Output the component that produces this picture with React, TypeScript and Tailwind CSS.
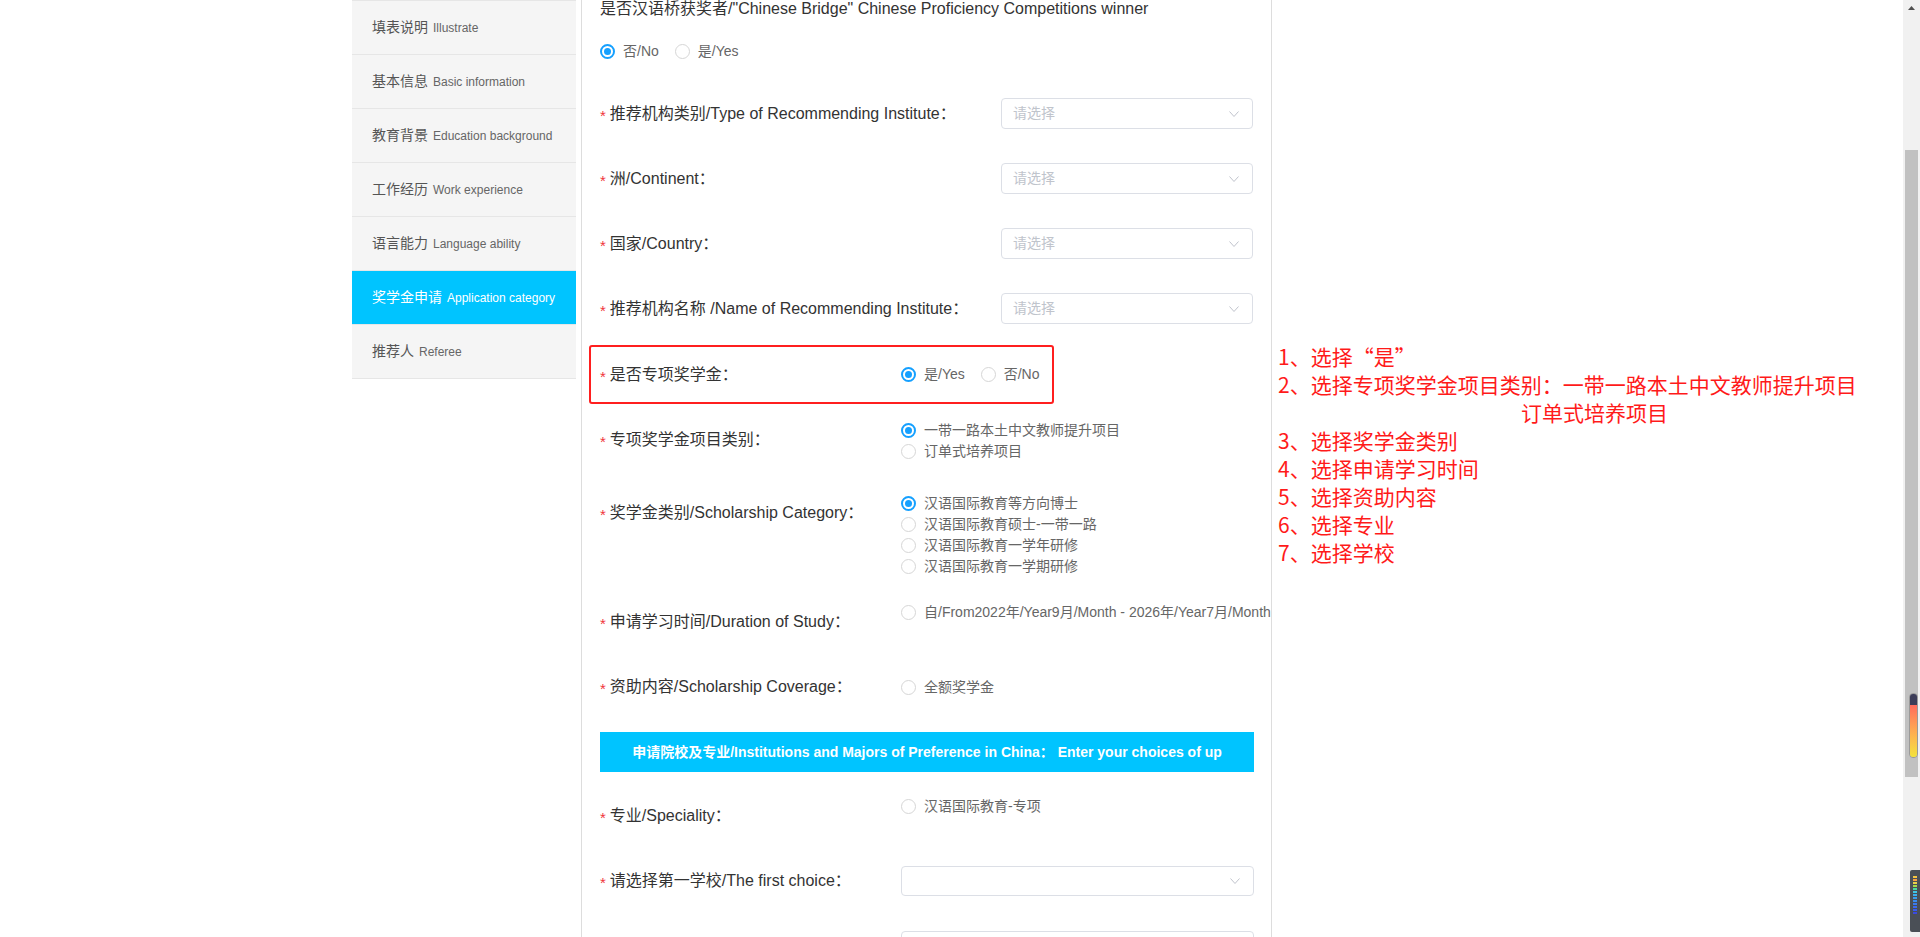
import React from "react";

const FONT = "font-['Liberation_Sans','Noto_Sans_CJK_SC',sans-serif]";

function Radio({ checked, label, className = "" }: { checked?: boolean; label: string; className?: string }) {
  return (
    <div className={"flex shrink-0 items-center whitespace-nowrap " + className}>
      {checked ? (
        <span className="flex h-[15px] w-[15px] shrink-0 items-center justify-center rounded-full border-2 border-[#15a0ff] bg-white">
          <span className="h-[7px] w-[7px] rounded-full bg-[#15a0ff]" />
        </span>
      ) : (
        <span className="h-[15px] w-[15px] shrink-0 rounded-full border border-[#d6d6d6] bg-white" />
      )}
      <span className="ml-[8px] text-[14px] text-[#666666]">{label}</span>
    </div>
  );
}

function Label({ text, className = "" }: { text: string; className?: string }) {
  return (
    <div className={"flex shrink-0 items-center whitespace-nowrap text-[16px] text-[#333333] " + className}>
      <span className="mr-[4px] mt-[3px] text-[15px] leading-none text-[#f0353b]">*</span>
      <span>{text}</span>
    </div>
  );
}

function Chevron() {
  return (
    <svg width="10" height="6" viewBox="0 0 10 6" fill="none">
      <polyline points="0.5,0.5 5,5.5 9.5,0.5" stroke="#c0c4cc" strokeWidth="1" />
    </svg>
  );
}

function Select({ placeholder, className = "" }: { placeholder?: string; className?: string }) {
  return (
    <div
      className={
        "flex shrink-0 items-center justify-between rounded-[4px] border border-[#dcdfe6] bg-white pl-[11px] pr-[13px] " +
        className
      }
    >
      <span className="text-[14px] text-[#c0c4cc]">{placeholder}</span>
      <Chevron />
    </div>
  );
}

const navItems = [
  { zh: "填表说明", en: "Illustrate" },
  { zh: "基本信息", en: "Basic information" },
  { zh: "教育背景", en: "Education background" },
  { zh: "工作经历", en: "Work experience" },
  { zh: "语言能力", en: "Language ability" },
  { zh: "奖学金申请", en: "Application category", active: true },
  { zh: "推荐人", en: "Referee" },
];

const notes = [
  "1、选择“是”",
  "2、选择专项奖学金项目类别：一带一路本土中文教师提升项目",
  "__indent__订单式培养项目",
  "3、选择奖学金类别",
  "4、选择申请学习时间",
  "5、选择资助内容",
  "6、选择专业",
  "7、选择学校",
];

export default function App() {
  return (
    <div className={"flex h-[937px] w-[1920px] overflow-hidden bg-white " + FONT}>
      {/* left blank */}
      <div className="w-[352px] shrink-0" />

      {/* sidebar */}
      <aside className="w-[224px] shrink-0 self-start border-t border-[#e6e6e6] bg-[#f5f5f5]">
        {navItems.map((it) => (
          <div
            key={it.zh}
            className={
              it.active
                ? "flex h-[54px] items-center border-b border-[#e6e6e6] bg-[#00c4ff] pl-[20px] text-white"
                : "flex h-[54px] items-center border-b border-[#e6e6e6] pl-[20px]"
            }
          >
            <span className={it.active ? "text-[14px] text-white" : "text-[14px] text-[#555555]"}>{it.zh}</span>
            <span className={it.active ? "ml-[5px] text-[12px] text-white" : "ml-[5px] text-[12px] text-[#666666]"}>
              {it.en}
            </span>
          </div>
        ))}
      </aside>

      {/* main form panel */}
      <main className="ml-[5px] flex w-[691px] shrink-0 flex-col overflow-hidden border-x border-[#dddddd] pl-[18px] pr-[17px]">
        <div className="h-[18px] whitespace-nowrap text-[16px] leading-[18px] text-[#333333]">
          是否汉语桥获奖者/"Chinese Bridge" Chinese Proficiency Competitions winner
        </div>

        <div className="mt-[23px] flex h-[20px] items-center">
          <Radio checked label="否/No" className="mr-[16px]" />
          <Radio label="是/Yes" />
        </div>

        <div className="mt-[37px] flex h-[31px] items-center">
          <Label text="推荐机构类别/Type of Recommending Institute：" className="w-[401px]" />
          <Select placeholder="请选择" className="h-[31px] w-[252px]" />
        </div>
        <div className="mt-[34px] flex h-[31px] items-center">
          <Label text="洲/Continent：" className="w-[401px]" />
          <Select placeholder="请选择" className="h-[31px] w-[252px]" />
        </div>
        <div className="mt-[34px] flex h-[31px] items-center">
          <Label text="国家/Country：" className="w-[401px]" />
          <Select placeholder="请选择" className="h-[31px] w-[252px]" />
        </div>
        <div className="mt-[34px] flex h-[31px] items-center">
          <Label text="推荐机构名称 /Name of Recommending Institute：" className="w-[401px]" />
          <Select placeholder="请选择" className="h-[31px] w-[252px]" />
        </div>

        <div className="relative mt-[21px] flex h-[59px] shrink-0 items-center">
          <div className="pointer-events-none absolute inset-y-0 left-[-11px] w-[465px] rounded-[3px] border-2 border-[#ff1f1f]" />
          <Label text="是否专项奖学金：" className="w-[301px]" />
          <Radio checked label="是/Yes" className="mr-[16px]" />
          <Radio label="否/No" />
        </div>

        <div className="mt-[16px] flex items-start">
          <Label text="专项奖学金项目类别：" className="h-[40px] w-[301px]" />
          <div className="flex flex-col">
            <Radio checked label="一带一路本土中文教师提升项目" className="h-[21px]" />
            <Radio label="订单式培养项目" className="h-[21px]" />
          </div>
        </div>

        <div className="mt-[31px] flex items-start">
          <Label text="奖学金类别/Scholarship Category：" className="h-[40px] w-[301px]" />
          <div className="flex flex-col">
            <Radio checked label="汉语国际教育等方向博士" className="h-[21px]" />
            <Radio label="汉语国际教育硕士-一带一路" className="h-[21px]" />
            <Radio label="汉语国际教育一学年研修" className="h-[21px]" />
            <Radio label="汉语国际教育一学期研修" className="h-[21px]" />
          </div>
        </div>

        <div className="mt-[25px] flex items-start">
          <Label text="申请学习时间/Duration of Study：" className="h-[40px] w-[301px]" />
          <Radio label="自/From2022年/Year9月/Month - 2026年/Year7月/Month" className="h-[21px]" />
        </div>

        <div className="mt-[25px] flex h-[40px] items-center">
          <Label text="资助内容/Scholarship Coverage：" className="h-[40px] w-[301px]" />
          <Radio label="全额奖学金" className="h-[21px]" />
        </div>

        <div className="mt-[25px] flex h-[40px] shrink-0 items-center justify-center overflow-hidden whitespace-nowrap bg-[#00c4ff] text-[14px] font-bold text-white">
          申请院校及专业/Institutions and Majors of Preference in China： Enter your choices of up
        </div>

        <div className="mt-[24px] flex items-start">
          <Label text="专业/Speciality：" className="h-[40px] w-[301px]" />
          <Radio label="汉语国际教育-专项" className="h-[21px]" />
        </div>

        <div className="mt-[30px] flex h-[30px] items-center">
          <Label text="请选择第一学校/The first choice：" className="w-[301px]" />
          <Select className="h-[30px] w-[353px]" />
        </div>

        <div className="mt-[35px] flex h-[30px] items-center">
          <div className="w-[301px] shrink-0" />
          <Select className="h-[30px] w-[353px]" />
        </div>
      </main>

      {/* annotations */}
      <section className="ml-[6px] flex-1 pt-[342px] font-['Noto_Sans_CJK_SC',sans-serif] text-[21px] leading-[28px] text-[#ff1a1a]">
        {notes.map((n) =>
          n.startsWith("__indent__") ? (
            <div key={n} className="whitespace-nowrap pl-[243px]">
              {n.replace("__indent__", "")}
            </div>
          ) : (
            <div key={n} className="whitespace-nowrap">
              {n}
            </div>
          )
        )}
      </section>

      {/* scrollbar */}
      <div className="relative flex w-[17px] shrink-0 flex-col items-center bg-[#f1f1f1]">
        <svg className="mt-[6px]" width="7" height="4" viewBox="0 0 7 4">
          <polygon points="0,4 3.5,0 7,4" fill="#505050" />
        </svg>
        <div className="mt-[140px] h-[627px] w-[13px] bg-[#c1c1c1]" />
        <div className="absolute left-[6px] top-[693px] flex h-[65px] w-[9px] flex-col overflow-hidden rounded-[4px] border border-[#9a9a9a]">
          <div className="h-[11px] bg-[#3c3c58]" />
          <div className="flex-1 bg-gradient-to-b from-[#ff6a5c] to-[#f3e33a]" />
        </div>
        <div className="absolute left-[7px] top-[870px] flex h-[62px] w-[10px] flex-col items-center gap-[1px] rounded-l-[2px] bg-[#4a4f56] pt-[6px]">
          <div className="h-[2px] w-[4px] bg-[#f5c542]" />
          <div className="h-[2px] w-[4px] bg-[#f5a142]" />
          <div className="h-[2px] w-[4px] bg-[#e8d04a]" />
          <div className="h-[2px] w-[4px] bg-[#a6d94a]" />
          <div className="h-[2px] w-[4px] bg-[#4ad9a0]" />
          <div className="h-[2px] w-[4px] bg-[#3ec7e6]" />
          <div className="h-[2px] w-[4px] bg-[#3ab0f0]" />
          <div className="h-[2px] w-[4px] bg-[#3a9cf0]" />
          <div className="h-[2px] w-[4px] bg-[#3a8af0]" />
          <div className="h-[2px] w-[4px] bg-[#3a7af0]" />
          <div className="h-[2px] w-[4px] bg-[#3a6af0]" />
          <div className="h-[2px] w-[4px] bg-[#3a5af0]" />
          <div className="h-[2px] w-[4px] bg-[#3a4ae0]" />
        </div>
      </div>
    </div>
  );
}
